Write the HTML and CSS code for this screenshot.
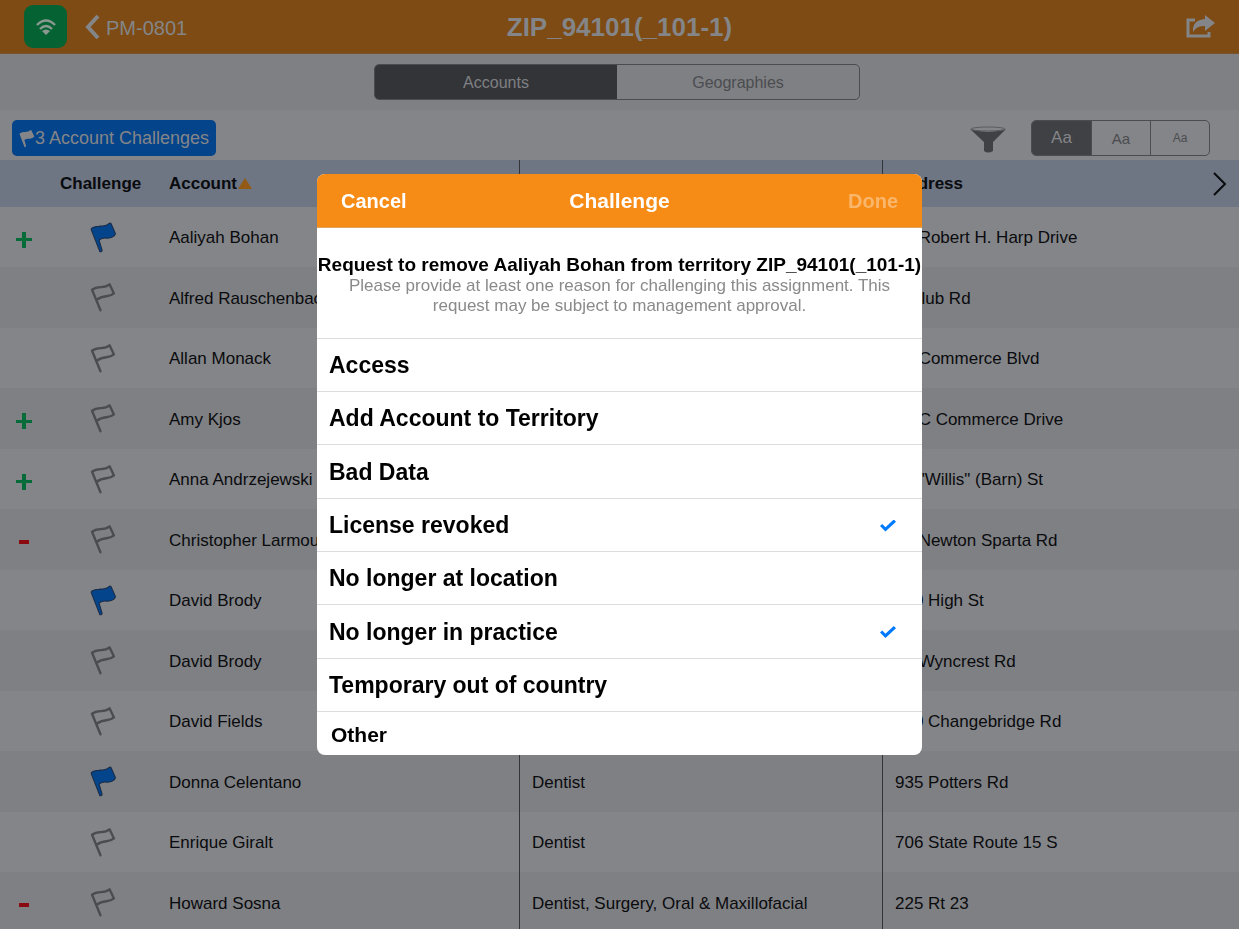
FILE: index.html
```
<!DOCTYPE html>
<html lang="en">
<head>
	<meta charset="utf-8">
	<title>ZIP_94101(_101-1)</title>
	<link rel="stylesheet" href="styles.css">
</head>
<body>
<svg class="symbols" aria-hidden="true">
	<symbol id="flag" viewBox="0 0 80 92">
		<path d="M6 23 L31 84 M6 23 C24 8 40 22 58 7 L71 34 C54 49 42 35 20 53" fill="none" stroke="currentColor" stroke-width="7" stroke-linecap="round" stroke-linejoin="round"/>
	</symbol>
	<symbol id="flag-filled" viewBox="0 0 80 92">
		<path d="M4 24 Q2 19 7 17 C24 7 40 19 57 4 Q61 2 63 6 L75 33 Q76 38 72 41 C56 56 42 40 27 54 L36 84 Q35 90 29 88 Z" fill="currentColor" stroke="#1c2b44" stroke-width="3" stroke-linejoin="round"/>
	</symbol>
</svg>

<div class="screen">
	<header class="topbar">
		<div class="topbar-left">
			<span class="wifi">
				<svg width="20" height="16" viewBox="0 0 20 16" fill="none" stroke="#8b9990">
					<path d="M1 6 Q10 -3 19 6" stroke-width="2.4"/>
					<path d="M4 10 Q10 4 16 10" stroke-width="2.4"/>
					<path d="M10 16 L6 12 Q10 9 14 12 Z" fill="#8b9990" stroke="none"/>
				</svg>
			</span>
			<a class="back" href="#">
				<svg width="15" height="26" viewBox="0 0 15 26" fill="none" stroke="#848588" stroke-width="4"><path d="M13 2 L3 13 L13 24"/></svg>
				<span>PM-0801</span>
			</a>
		</div>
		<h1>ZIP_94101(_101-1)</h1>
		<button class="share" aria-label="Share">
			<svg width="29" height="23" viewBox="0 0 29 23">
				<path d="M9 5 H2 V21 H23 V17" fill="none" stroke="#848588" stroke-width="3"/>
				<path d="M19 0 L29 8 L19 16 V11 Q11 10 7 17 Q6 5 19 4 Z" fill="#848588"/>
			</svg>
		</button>
	</header>

	<div class="tabs">
		<div class="segments">
			<button class="active">Accounts</button>
			<button>Geographies</button>
		</div>
	</div>

	<div class="toolbar">
		<button class="challenges">
			<svg width="16" height="19" viewBox="0 0 80 92"><path d="M2 22 C24 7 40 19 60 2 L77 36 C56 56 42 40 27 54 L36 86 L28 90 Z" fill="#848588"/></svg>
			3 Account Challenges
		</button>
		<div class="tools">
			<button class="filter" aria-label="Filter">
				<svg width="36" height="27" viewBox="0 0 36 27">
					<path d="M0 3 Q18 9 36 3 L23 16 V25 Q18 28 14 25 V16 Z" fill="#404145"/>
					<ellipse cx="18" cy="3" rx="17" ry="2" fill="#848588" stroke="#5b5c60"/>
				</svg>
			</button>
			<div class="sizes">
				<button class="large active">Aa</button>
				<button class="medium">Aa</button>
				<button class="small">Aa</button>
			</div>
		</div>
	</div>

	<table class="accounts">
		<colgroup>
			<col class="col-change">
			<col class="col-flag">
			<col class="col-account">
			<col class="col-specialty">
			<col>
		</colgroup>
		<thead>
			<tr>
				<th></th>
				<th>Challenge</th>
				<th>Account<span class="sort"></span></th>
				<th></th>
				<th>
					<div class="last-head">Address
						<svg width="14" height="24" viewBox="0 0 14 24" fill="none" stroke="#0a0b0e" stroke-width="2"><path d="M1 1 L12 12 L1 23"/></svg>
					</div>
				</th>
			</tr>
		</thead>
		<tbody>
			<tr>
				<td><span class="plus"></span></td>
				<td><svg class="flag on"><use href="#flag-filled"/></svg></td>
				<td>Aaliyah Bohan</td><td></td><td>10 Robert H. Harp Drive</td>
			</tr>
			<tr>
				<td></td>
				<td><svg class="flag"><use href="#flag"/></svg></td>
				<td>Alfred Rauschenbach</td><td></td><td>1 Club Rd</td>
			</tr>
			<tr>
				<td></td>
				<td><svg class="flag"><use href="#flag"/></svg></td>
				<td>Allan Monack</td><td></td><td>10 Commerce Blvd</td>
			</tr>
			<tr>
				<td><span class="plus"></span></td>
				<td><svg class="flag"><use href="#flag"/></svg></td>
				<td>Amy Kjos</td><td></td><td>10 C Commerce Drive</td>
			</tr>
			<tr>
				<td><span class="plus"></span></td>
				<td><svg class="flag"><use href="#flag"/></svg></td>
				<td>Anna Andrzejewski</td><td></td><td>10 "Willis" (Barn) St</td>
			</tr>
			<tr>
				<td><span class="minus"></span></td>
				<td><svg class="flag"><use href="#flag"/></svg></td>
				<td>Christopher Larmour</td><td></td><td>10 Newton Sparta Rd</td>
			</tr>
			<tr>
				<td></td>
				<td><svg class="flag on"><use href="#flag-filled"/></svg></td>
				<td>David Brody</td><td></td><td>100 High St</td>
			</tr>
			<tr>
				<td></td>
				<td><svg class="flag"><use href="#flag"/></svg></td>
				<td>David Brody</td><td></td><td>10 Wyncrest Rd</td>
			</tr>
			<tr>
				<td></td>
				<td><svg class="flag"><use href="#flag"/></svg></td>
				<td>David Fields</td><td></td><td>170 Changebridge Rd</td>
			</tr>
			<tr>
				<td></td>
				<td><svg class="flag on"><use href="#flag-filled"/></svg></td>
				<td>Donna Celentano</td><td>Dentist</td><td>935 Potters Rd</td>
			</tr>
			<tr>
				<td></td>
				<td><svg class="flag"><use href="#flag"/></svg></td>
				<td>Enrique Giralt</td><td>Dentist</td><td>706 State Route 15 S</td>
			</tr>
			<tr>
				<td><span class="minus"></span></td>
				<td><svg class="flag"><use href="#flag"/></svg></td>
				<td>Howard Sosna</td><td>Dentist, Surgery, Oral &amp; Maxillofacial</td><td>225 Rt 23</td>
			</tr>
		</tbody>
	</table>
</div>

<div class="overlay">
	<form class="modal" role="dialog" aria-labelledby="modal-title">
		<div class="modal-head">
			<button type="button">Cancel</button>
			<h2 id="modal-title">Challenge</h2>
			<button type="button" class="done" disabled>Done</button>
		</div>
		<div class="intro">
			<h3>Request to remove Aaliyah Bohan from territory ZIP_94101(_101-1)</h3>
			<p>Please provide at least one reason for challenging this assignment. This request may be subject to management approval.</p>
		</div>
		<div class="reasons">
			<label>Access <input type="checkbox"></label>
			<label>Add Account to Territory <input type="checkbox"></label>
			<label>Bad Data <input type="checkbox"></label>
			<label>License revoked <input type="checkbox" checked></label>
			<label>No longer at location <input type="checkbox"></label>
			<label>No longer in practice <input type="checkbox" checked></label>
			<label>Temporary out of country <input type="checkbox"></label>
		</div>
		<button type="button" class="other">Other</button>
	</form>
</div>
</body>
</html>
```
FILE: styles.css
```
* {
	box-sizing: border-box;
}

body {
	margin: 0;
	font-family: "Liberation Sans", Arial, sans-serif;
	font-size: 17px;
	color: #0a0b0e;
	background: #848588;
}

h1, h2, h3, p {
	margin: 0;
}

button {
	padding: 0;
	border: 0;
	background: none;
	color: inherit;
	font: inherit;
}

svg {
	display: block;
}

.symbols {
	position: absolute;
	width: 0;
	height: 0;
}

.screen {
	height: 100vh;
	overflow: hidden;
}

/* top bar */
.topbar {
	display: grid;
	grid-template-columns: 1fr auto 1fr;
	align-items: center;
	height: 54px;
	padding: 0 24px;
	background: #7d4b13;
	border-bottom: 1px solid #76552f;
	color: #848588;
}

.topbar-left {
	display: flex;
	align-items: center;
	gap: 18px;
}

.wifi {
	display: flex;
	align-items: center;
	justify-content: center;
	width: 43px;
	height: 43px;
	border-radius: 9px;
	background: #056233;
}

.back {
	display: flex;
	align-items: center;
	gap: 6px;
	color: #848588;
	font-size: 20px;
	text-decoration: none;
}

.back span {
	padding-top: 3px;
}

h1 {
	padding-top: 2px;
	font-size: 26px;
}

.share {
	justify-self: end;
}

/* Accounts / Geographies */
.tabs {
	height: 56px;
	padding: 10px 5px 10px 0;
	background: #7f8083;
}

.segments {
	display: flex;
	width: 486px;
	height: 36px;
	margin: 0 auto;
	border: 1px solid #4b4c50;
	border-radius: 5px;
	overflow: hidden;
}

.segments button {
	flex: 1;
	padding-top: 2px;
	color: #4b4c50;
	font-size: 16px;
}

.segments .active {
	background: #333438;
	color: #7f8083;
}

.toolbar {
	display: flex;
	align-items: center;
	justify-content: space-between;
	height: 50px;
	padding: 5px 29px 0 12px;
}

.challenges {
	display: flex;
	align-items: center;
	height: 36px;
	padding: 1px 7px 0 7px;
	border-radius: 5px;
	background: #04448a;
	color: #848588;
	font-size: 18px;
}

.tools {
	display: flex;
	align-items: center;
	gap: 25px;
}

.filter {
	padding-top: 3px;
}

.sizes {
	display: flex;
	height: 36px;
	border: 1px solid #4b4c50;
	border-radius: 5px;
	overflow: hidden;
}

.sizes button {
	width: 59px;
	padding-top: 1px;
	color: #4b4c50;
}

.sizes button + button {
	border-left: 1px solid #4b4c50;
}

.sizes .active {
	background: #404145;
	color: #848588;
}

.sizes .medium {
	font-size: 15px;
}

.sizes .small {
	font-size: 12px;
}

/* account list */
.accounts {
	width: 100%;
	table-layout: fixed;
	border-collapse: separate;
	border-spacing: 0;
}

.col-change {
	width: 48px;
}

.col-flag {
	width: 109px;
}

.col-account,
.col-specialty {
	width: 363px;
}

.accounts th,
.accounts td {
	padding: 0 12px;
	text-align: left;
	white-space: nowrap;
}

.accounts td {
	padding-top: 2px;
}

.accounts th:nth-child(3),
.accounts th:nth-child(4),
.accounts td:nth-child(3),
.accounts td:nth-child(4) {
	border-right: 1px solid #333438;
}

.accounts thead tr {
	height: 47px;
	background: #6e7684;
}

.accounts tbody tr {
	height: 60px;
}

.accounts tbody tr:nth-child(even) {
	height: 61px;
	background: #7f8083;
}

.sort {
	display: inline-block;
	margin-left: 1px;
	border: 7px solid transparent;
	border-top: 0;
	border-bottom: 11px solid #935a16;
}

.last-head {
	display: flex;
	align-items: center;
	justify-content: space-between;
}

.flag {
	width: 27px;
	height: 31px;
	margin: 0 auto;
	color: #4b4c50;
}

.flag.on {
	color: #04448a;
}

.accounts td:nth-child(2) {
	padding: 0 11px 0 13px;
}

.accounts td:first-child {
	padding: 5px 0 0;
}

.plus,
.minus {
	display: block;
	width: 16px;
	height: 16px;
	margin: 0 auto;
	background:
		linear-gradient(#056b38, #056b38) center / 16px 3px no-repeat,
		linear-gradient(#056b38, #056b38) center / 4px 16px no-repeat;
}

.minus {
	width: 10px;
	height: 4px;
	background: #8b0a10;
}

/* challenge dialog */
.overlay {
	position: fixed;
	inset: 0;
	display: flex;
	align-items: center;
	justify-content: center;
}

.modal {
	width: 605px;
	max-width: 100%;
	border-radius: 8px;
	background: #fff;
	color: #000;
	overflow: hidden;
}

.modal-head {
	display: grid;
	grid-template-columns: 1fr auto 1fr;
	align-items: center;
	height: 54px;
	padding: 0 24px;
	border-bottom: 1px solid #e0a460;
	background: #f68b16;
	color: #fff;
	font-size: 20px;
	font-weight: bold;
}

.modal-head button {
	justify-self: start;
	padding-top: 2px;
}

.modal-head h2 {
	font-size: 21px;
}

.modal-head .done {
	justify-self: end;
	color: #fab76c;
}

.intro {
	height: 110px;
	padding-top: 25px;
	text-align: center;
}

.intro h3 {
	font-size: 19px;
	line-height: 23px;
	white-space: nowrap;
}

.intro p {
	padding: 0 16px;
	line-height: 20px;
	color: #8a8a8a;
}

.reasons label {
	display: flex;
	align-items: center;
	justify-content: space-between;
	height: 53px;
	padding: 1px 26px 0 12px;
	border-top: 1px solid #dcdcde;
	font-size: 23px;
	font-weight: bold;
}

.reasons label:nth-child(3n) {
	height: 54px;
}

.reasons input {
	appearance: none;
	width: 16px;
	height: 12px;
	margin: 0;
	clip-path: polygon(0 55%, 14% 38%, 34% 64%, 86% 0, 100% 18%, 34% 100%);
}

.reasons input:checked {
	background: #007aff;
}

.other {
	display: block;
	width: 100%;
	height: 44px;
	padding: 2px 14px 0;
	border-top: 1px solid #dcdcde;
	text-align: left;
	font-size: 21px;
	font-weight: bold;
}
```
